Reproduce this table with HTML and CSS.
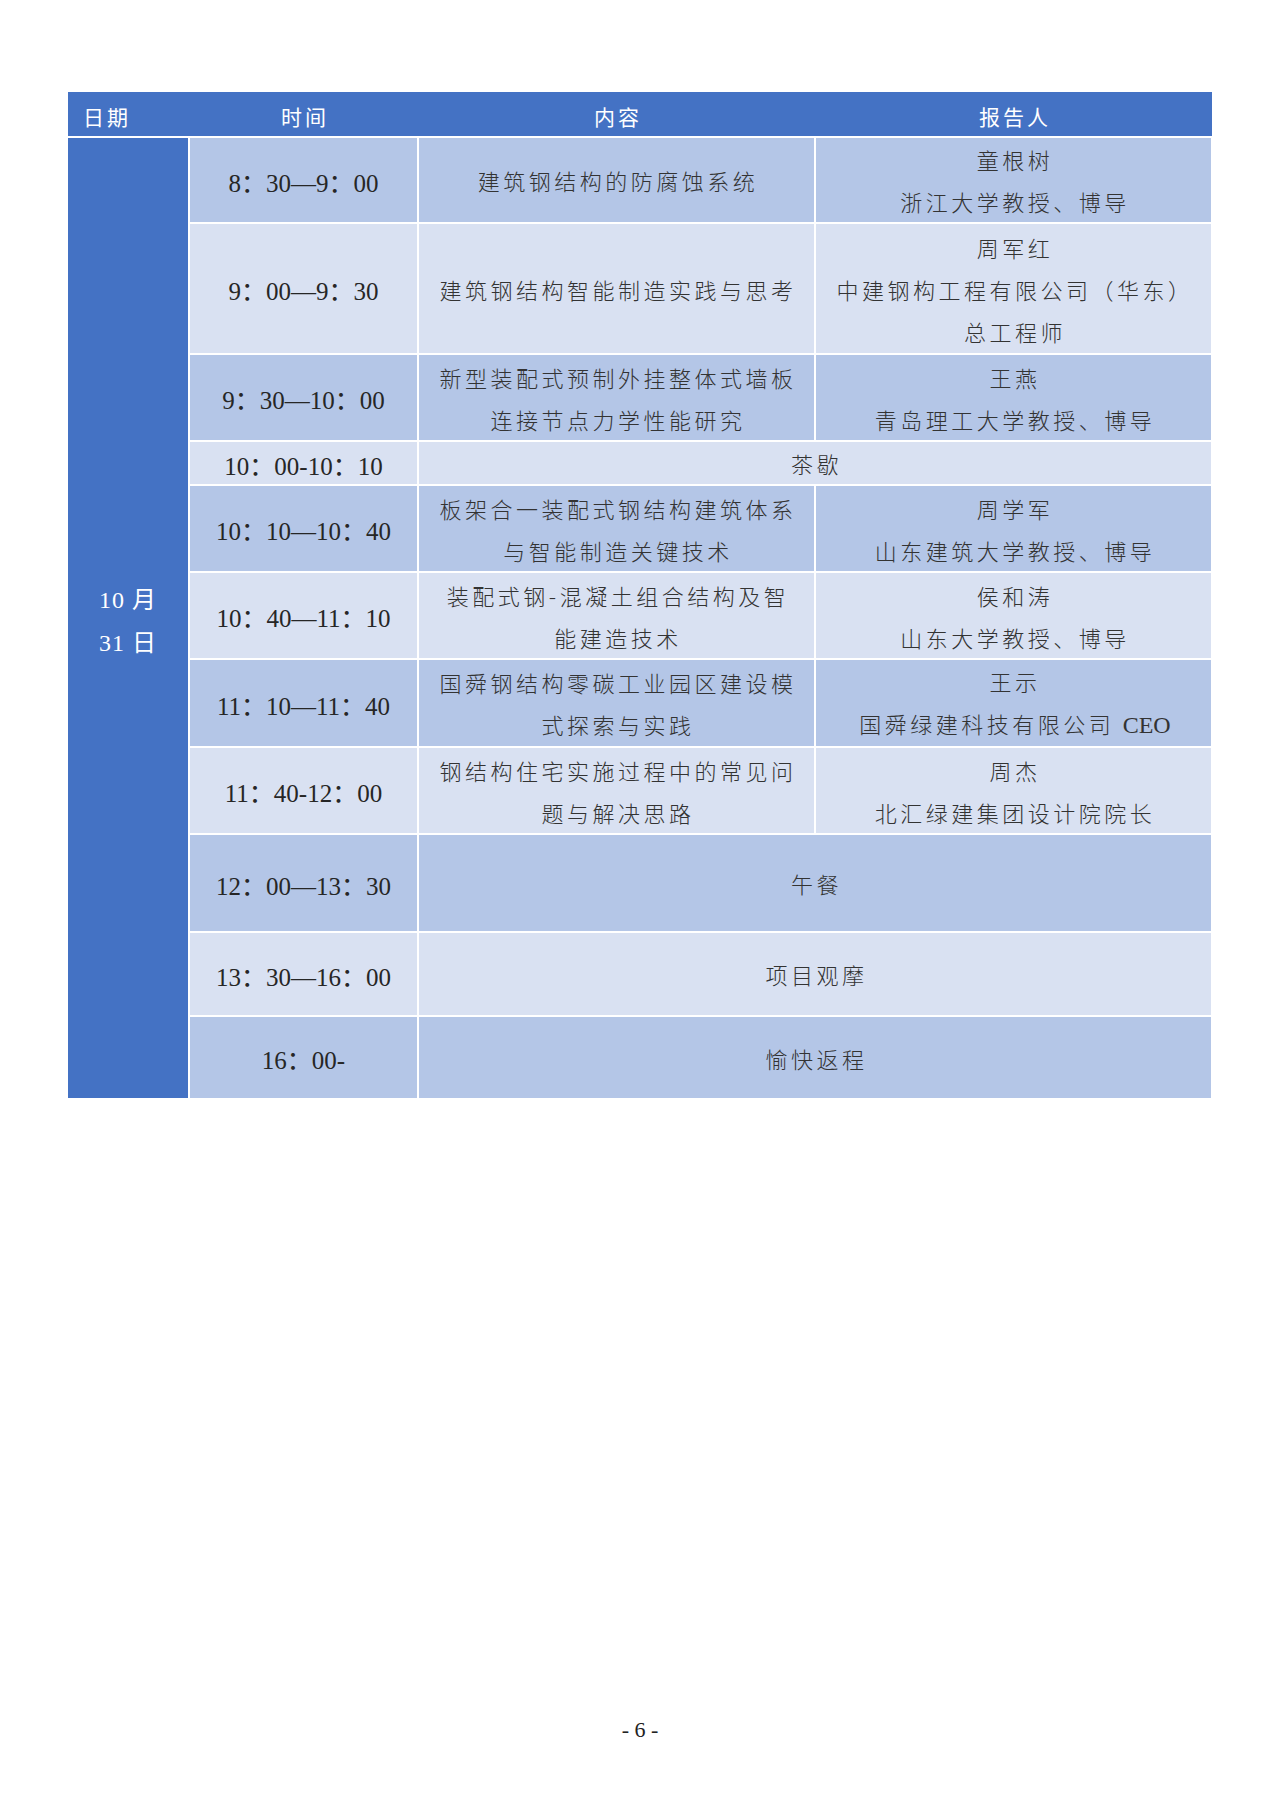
FILE: index.html
```html
<!DOCTYPE html>
<html lang="zh-CN">
<head>
<meta charset="utf-8">
<title>日程</title>
<link rel="stylesheet" href="styles.css">
</head>
<body>
<div class="page">
  <table class="agenda">
    <colgroup>
      <col class="c-date"><col class="c-time"><col class="c-topic"><col class="c-who">
    </colgroup>
    <thead>
      <tr class="head">
        <th class="h-date">日期</th>
        <th>时间</th>
        <th>内容</th>
        <th>报告人</th>
      </tr>
    </thead>
    <tbody>
      <tr class="dark r86">
        <td class="date" rowspan="11">10 月<br>31 日</td>
        <td class="time">8：30—9：00</td>
        <td class="cn">建筑钢结构的防腐蚀系统</td>
        <td class="cn">童根树<br>浙江大学教授、博导</td>
      </tr>
      <tr class="light r131">
        <td class="time">9：00—9：30</td>
        <td class="cn">建筑钢结构智能制造实践与思考</td>
        <td class="cn">周军红<br>中建钢构工程有限公司（华东）<br>总工程师</td>
      </tr>
      <tr class="dark r87">
        <td class="time">9：30—10：00</td>
        <td class="cn">新型装配式预制外挂整体式墙板<br>连接节点力学性能研究</td>
        <td class="cn">王燕<br>青岛理工大学教授、博导</td>
      </tr>
      <tr class="light r44">
        <td class="time">10：00-10：10</td>
        <td class="cn" colspan="2">茶歇</td>
      </tr>
      <tr class="dark r87">
        <td class="time">10：10—10：40</td>
        <td class="cn">板架合一装配式钢结构建筑体系<br>与智能制造关键技术</td>
        <td class="cn">周学军<br>山东建筑大学教授、博导</td>
      </tr>
      <tr class="light r87">
        <td class="time">10：40—11：10</td>
        <td class="cn">装配式钢-混凝土组合结构及智<br>能建造技术</td>
        <td class="cn">侯和涛<br>山东大学教授、博导</td>
      </tr>
      <tr class="dark r86">
        <td class="time">11：10—11：40</td>
        <td class="cn">国舜钢结构零碳工业园区建设模<br>式探索与实践</td>
        <td class="cn">王示<br>国舜绿建科技有限公司 <span class="latin">CEO</span></td>
      </tr>
      <tr class="light r87">
        <td class="time">11：40-12：00</td>
        <td class="cn">钢结构住宅实施过程中的常见问<br>题与解决思路</td>
        <td class="cn">周杰<br>北汇绿建集团设计院院长</td>
      </tr>
      <tr class="dark r98">
        <td class="time">12：00—13：30</td>
        <td class="cn" colspan="2">午餐</td>
      </tr>
      <tr class="light r84">
        <td class="time">13：30—16：00</td>
        <td class="cn" colspan="2">项目观摩</td>
      </tr>
      <tr class="dark r83">
        <td class="time">16：00-</td>
        <td class="cn" colspan="2">愉快返程</td>
      </tr>
    </tbody>
  </table>
  <div class="pageno">- 6 -</div>
</div>
</body>
</html>
```

FILE: styles.css
```css
html, body {
  margin: 0;
  padding: 0;
  background: #ffffff;
}

.page {
  box-sizing: border-box;
  min-height: 1809px;
  padding: 92px 68px 66px 68px;
  display: flex;
  flex-direction: column;
  font-family: "Liberation Serif", "Noto Sans CJK SC", serif;
  color: #333333;
}

.agenda {
  width: 1144px;
  border-collapse: collapse;
  table-layout: fixed;
}

.c-date { width: 121px; }
.c-time { width: 229px; }
.c-topic { width: 397px; }
.c-who { width: 397px; }

.head th {
  background: #4472c4;
  color: #ffffff;
  font-family: "Noto Sans CJK SC", "Liberation Sans", sans-serif;
  font-weight: 400;
  font-size: 21px;
  letter-spacing: 3px;
  padding: 4px 0 0 3px;
  height: 40px;
  line-height: 40px;
  text-align: center;
  border: none;
  border-bottom: 2px solid #ffffff;
}

.head th.h-date {
  text-align: left;
  padding-left: 15px;
}

.agenda td {
  border: 2px solid #ffffff;
  padding: 0;
  text-align: center;
  vertical-align: middle;
  line-height: 42px;
}

.dark td { background: #b4c6e7; }
.light td { background: #d9e1f2; }

.agenda td.date {
  background: #4472c4;
  color: #ffffff;
  font-size: 24px;
  line-height: 43px;
  letter-spacing: 1px;
  padding-top: 7px;
  border-left: none;
}

.agenda td.time {
  font-size: 25px;
  letter-spacing: 0;
  color: #262626;
  padding-top: 7px;
  line-height: 34px;
}

.cn {
  font-family: "Noto Sans CJK SC", "Liberation Serif", sans-serif;
  font-weight: 300;
  font-size: 22px;
  letter-spacing: 3.5px;
  padding-left: 3px !important;
}

.latin {
  font-family: "Liberation Serif", serif;
  font-size: 24px;
  letter-spacing: 0;
}

.r44 { height: 44px; }
.r83 { height: 83px; }
.r84 { height: 84px; }
.r86 { height: 86px; }
.r87 { height: 87px; }
.r98 { height: 98px; }
.r131 { height: 131px; }

.pageno {
  margin-top: auto;
  text-align: center;
  font-size: 22px;
  line-height: 26px;
  color: #222222;
}
```
